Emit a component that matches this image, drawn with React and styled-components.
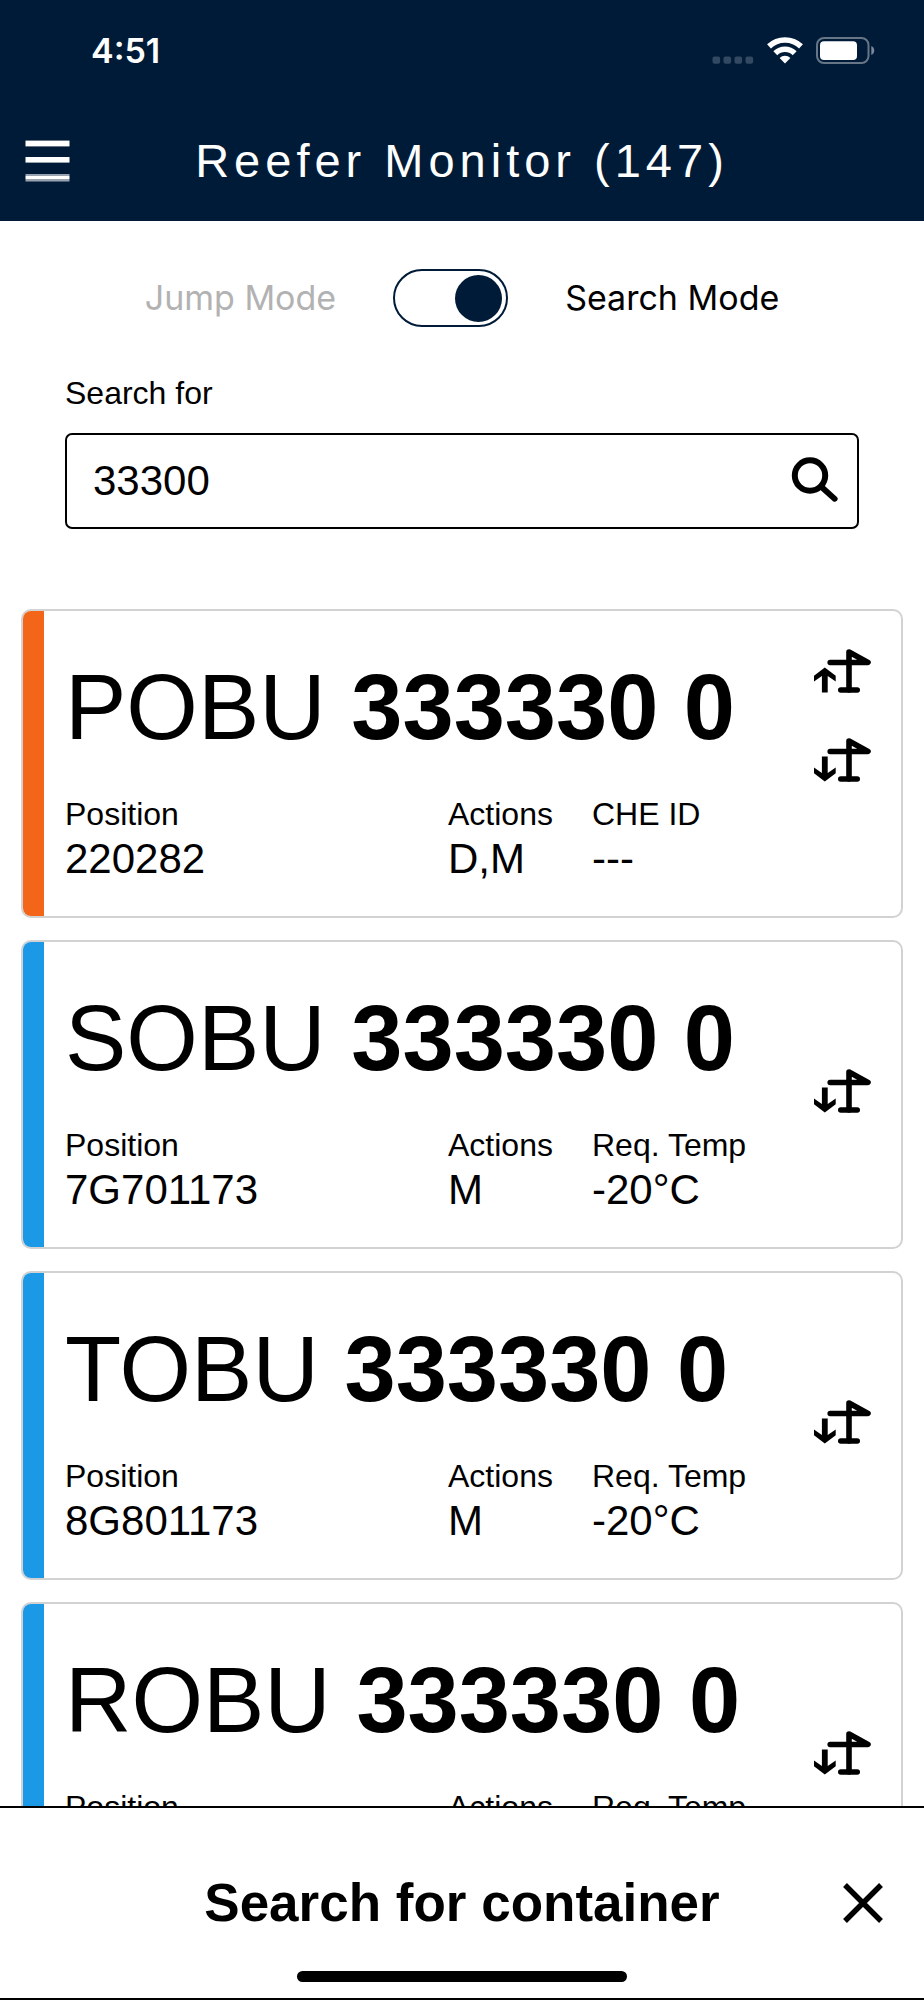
import React, { useState } from "react";
import styled, { createGlobalStyle } from "styled-components";

const GlobalStyle = createGlobalStyle`
  * {
    box-sizing: border-box;
  }
  body {
    margin: 0;
    background: #ffffff;
    color: #000000;
    font-family: "Liberation Sans", Helvetica, Arial, sans-serif;
  }
  button {
    padding: 0;
    border: 0;
    background: none;
    color: inherit;
    cursor: pointer;
  }
  svg {
    display: block;
  }
`;

const navy = "#001b37";
const orange = "#f3661a";
const blue = "#1b98e6";

const containers = [
  {
    prefix: "POBU",
    number: "333330 0",
    color: orange,
    moves: ["up", "down"],
    fields: [["Position", "220282"], ["Actions", "D,M"], ["CHE ID", "---"]]
  },
  {
    prefix: "SOBU",
    number: "333330 0",
    color: blue,
    moves: ["down"],
    fields: [["Position", "7G701173"], ["Actions", "M"], ["Req. Temp", "-20°C"]]
  },
  {
    prefix: "TOBU",
    number: "333330 0",
    color: blue,
    moves: ["down"],
    fields: [["Position", "8G801173"], ["Actions", "M"], ["Req. Temp", "-20°C"]]
  },
  {
    prefix: "ROBU",
    number: "333330 0",
    color: blue,
    moves: ["down"],
    fields: [["Position", "---"], ["Actions", "M"], ["Req. Temp", "-20°C"]]
  }
];

const Screen = styled.div`
  display: flex;
  flex-direction: column;
  height: 100vh;
`;

const Header = styled.header`
  flex: none;
  background: ${navy};
  color: #ffffff;
`;

const StatusBar = styled.div`
  display: flex;
  align-items: center;
  justify-content: space-between;
  height: 101px;
  padding: 0 48px 0 91px;
`;

const Time = styled.div`
  font-family: Inter, sans-serif;
  font-size: 34px;
  font-weight: 600;
`;

const StatusIcons = styled.div`
  display: flex;
  align-items: center;
  gap: 13px;
`;

const NavBar = styled.div`
  display: grid;
  grid-template-columns: 1fr auto 1fr;
  align-items: center;
  height: 120px;
  padding: 0 25px;
`;

const Title = styled.h1`
  margin: 0;
  font-size: 47px;
  font-weight: 400;
  line-height: 56px;
  letter-spacing: 5px;
`;

const MenuButton = styled.button`
  justify-self: start;
`;

function SignalIcon() {
  return (
    <svg width="42" height="27" viewBox="0 0 42 27" fill="#334962">
      <rect x="0.5" y="19.5" width="7.6" height="7.3" rx="2" />
      <rect x="11.5" y="19.5" width="7.6" height="7.3" rx="2" />
      <rect x="22.5" y="19.5" width="7.6" height="7.3" rx="2" />
      <rect x="33.5" y="19.5" width="7.6" height="7.3" rx="2" />
    </svg>
  );
}

function WifiIcon() {
  return (
    <svg width="36" height="27" viewBox="0 0 36 27" fill="none" stroke="#ffffff">
      <path d="M2 9.4A23.3 23.3 0 0 1 34 9.4" strokeWidth="5.6" />
      <path d="M8.3 16.2A14 14 0 0 1 27.7 16.2" strokeWidth="5.6" />
      <path d="M18 26.4L12.6 21A7.8 7.8 0 0 1 23.4 21Z" fill="#ffffff" stroke="none" />
    </svg>
  );
}

function BatteryIcon() {
  return (
    <svg width="60" height="27" viewBox="0 0 60 27">
      <rect x="1" y="1" width="51.5" height="25" rx="7" fill="none" stroke="#667687" strokeWidth="2" />
      <rect x="4" y="4.2" width="37" height="18.8" rx="4" fill="#ffffff" />
      <path d="M55.3 9C59.2 10.5 59.2 16.5 55.3 18Z" fill="#7b8998" />
    </svg>
  );
}

function MenuIcon() {
  return (
    <svg width="45" height="42" viewBox="0 0 45 42" fill="#ffffff">
      <rect x="0.5" y="0.6" width="44" height="5.8" />
      <rect x="0.5" y="17" width="44" height="5.6" />
      <rect x="0.5" y="34" width="44" height="2" opacity="0.6" />
      <rect x="0.5" y="36" width="44" height="3" />
      <rect x="0.5" y="39" width="44" height="2.5" opacity="0.6" />
    </svg>
  );
}

const Main = styled.main`
  flex: 1;
  min-height: 0;
  overflow-y: auto;
  scrollbar-width: none;
`;

const ModeRow = styled.div`
  display: flex;
  align-items: center;
  justify-content: center;
  gap: 57px;
  padding-top: 48px;
`;

const ModeLabel = styled.label`
  font-family: Inter, sans-serif;
  font-size: 34px;
  line-height: 42px;
  color: ${props => (props.$active ? "#000000" : "#b2b2b2")};
`;

const Switch = styled.input`
  appearance: none;
  display: flex;
  align-items: center;
  justify-content: flex-start;
  width: 115px;
  height: 58px;
  margin: 0;
  padding: 0 4px;
  border: 2px solid ${navy};
  border-radius: 30px;
  cursor: pointer;
  &::before {
    content: "";
    width: 47px;
    height: 47px;
    border-radius: 50%;
    background: ${navy};
  }
  &:checked {
    justify-content: flex-end;
  }
`;

const SearchForm = styled.form`
  padding: 46px 65px 0;
`;

const SearchLabel = styled.label`
  display: block;
  margin-bottom: 20px;
  font-size: 32px;
  line-height: 40px;
`;

const SearchBox = styled.div`
  display: flex;
  align-items: center;
  height: 96px;
  padding: 0 18px 0 26px;
  border: 2px solid #000000;
  border-radius: 7px;
`;

const SearchInput = styled.input`
  flex: 1;
  min-width: 0;
  padding: 0;
  border: 0;
  outline: 0;
  background: none;
  color: inherit;
  font-family: inherit;
  font-size: 42px;
`;

function SearchIcon() {
  return (
    <svg width="48" height="48" viewBox="0 0 48 48" fill="none" stroke="#000000">
      <circle cx="19" cy="18.5" r="15.2" strokeWidth="6" />
      <path d="M30 29.5L43.7 41.8" strokeWidth="5.8" strokeLinecap="round" />
    </svg>
  );
}

const List = styled.ul`
  display: flex;
  flex-direction: column;
  gap: 22px;
  margin: 0;
  padding: 80px 21px 22px;
  list-style: none;
`;

const Card = styled.li`
  display: flex;
  border: 2px solid #d2d2d2;
  border-radius: 10px;
  overflow: hidden;
`;

const Stripe = styled.div`
  flex: none;
  width: 21px;
  background: ${props => props.$color};
`;

const CardBody = styled.div`
  flex: 1;
  min-width: 0;
  padding: 46px 22px 32px 21px;
`;

const ContainerId = styled.h2`
  margin: 0 0 37px;
  font-size: 92px;
  font-weight: 400;
  line-height: 100px;
  white-space: nowrap;
`;

const Fields = styled.dl`
  display: grid;
  grid-template-columns: 1fr 144px 200px;
  margin: 0;
`;

const FieldName = styled.dt`
  font-size: 32px;
  line-height: 40px;
`;

const FieldValue = styled.dd`
  margin: 0;
  font-size: 42px;
  line-height: 50px;
`;

const Moves = styled.div`
  display: grid;
  grid-template-rows: 44px 44px;
  row-gap: 45px;
  align-content: start;
  padding: 38px 29px 0 0;
`;

const Move = styled.div`
  grid-row: ${props => (props.$direction === "up" ? 1 : 2)};
`;

function CraneIcon({ direction }) {
  return (
    <svg width="58" height="44" viewBox="0 0 58 44" role="img" aria-label={"Crane " + direction}>
      <g
        fill="none"
        stroke="#000000"
        strokeWidth="5.6"
        strokeLinecap="round"
        strokeLinejoin="round"
      >
        <path d="M35 41V3L54 13.5H16.2" />
        <path d="M26.8 41H43.2" />
      </g>
      <g transform={direction === "down" ? "translate(0 62) scale(1 -1)" : undefined}>
        <path d="M10.8 18.6L21.7 26.8V32.6L13.7 27V43.5H7.9V27L0 32.6V26.8Z" />
      </g>
    </svg>
  );
}

function ContainerCard({ item }) {
  return (
    <Card>
      <Stripe $color={item.color} />
      <CardBody>
        <ContainerId>
          {item.prefix} <b>{item.number}</b>
        </ContainerId>
        <Fields>
          {item.fields.map(([name, value]) => (
            <div key={name}>
              <FieldName>{name}</FieldName>
              <FieldValue>{value}</FieldValue>
            </div>
          ))}
        </Fields>
      </CardBody>
      <Moves>
        {item.moves.map(direction => (
          <Move key={direction} $direction={direction}>
            <CraneIcon direction={direction} />
          </Move>
        ))}
      </Moves>
    </Card>
  );
}

const Footer = styled.footer`
  flex: none;
  padding: 65px 41px 16px;
  border-top: 2px solid #000000;
  border-bottom: 2px solid #000000;
  background: #ffffff;
`;

const FooterRow = styled.div`
  display: grid;
  grid-template-columns: 1fr auto 1fr;
  align-items: center;
`;

const FooterTitle = styled.h2`
  grid-column: 2;
  margin: 0;
  font-size: 53px;
  font-weight: 700;
  line-height: 60px;
`;

const CloseButton = styled.button`
  justify-self: end;
`;

const HomeIndicator = styled.div`
  width: 330px;
  height: 11px;
  margin: 38px auto 0;
  border-radius: 6px;
  background: #000000;
`;

function CloseIcon() {
  return (
    <svg width="40" height="40" viewBox="0 0 40 40" stroke="#000000" strokeWidth="5.4">
      <path d="M2 2L38 38M38 2L2 38" />
    </svg>
  );
}

export default function App() {
  const [searchMode, setSearchMode] = useState(true);
  const [query, setQuery] = useState("33300");

  return (
    <Screen>
      <GlobalStyle />
      <Header>
        <StatusBar>
          <Time>4:51</Time>
          <StatusIcons>
            <SignalIcon />
            <WifiIcon />
            <BatteryIcon />
          </StatusIcons>
        </StatusBar>
        <NavBar>
          <MenuButton type="button" aria-label="Menu">
            <MenuIcon />
          </MenuButton>
          <Title>Reefer Monitor (147)</Title>
        </NavBar>
      </Header>
      <Main>
        <ModeRow>
          <ModeLabel htmlFor="mode" $active={!searchMode}>
            Jump Mode
          </ModeLabel>
          <Switch
            id="mode"
            type="checkbox"
            role="switch"
            checked={searchMode}
            onChange={e => setSearchMode(e.target.checked)}
          />
          <ModeLabel htmlFor="mode" $active={searchMode}>
            Search Mode
          </ModeLabel>
        </ModeRow>
        <SearchForm onSubmit={e => e.preventDefault()}>
          <SearchLabel htmlFor="query">Search for</SearchLabel>
          <SearchBox>
            <SearchInput
              id="query"
              type="text"
              value={query}
              onChange={e => setQuery(e.target.value)}
            />
            <button type="submit" aria-label="Search">
              <SearchIcon />
            </button>
          </SearchBox>
        </SearchForm>
        <List>
          {containers.map(item => (
            <ContainerCard key={item.prefix} item={item} />
          ))}
        </List>
      </Main>
      <Footer>
        <FooterRow>
          <FooterTitle>Search for container</FooterTitle>
          <CloseButton type="button" aria-label="Close">
            <CloseIcon />
          </CloseButton>
        </FooterRow>
        <HomeIndicator />
      </Footer>
    </Screen>
  );
}
